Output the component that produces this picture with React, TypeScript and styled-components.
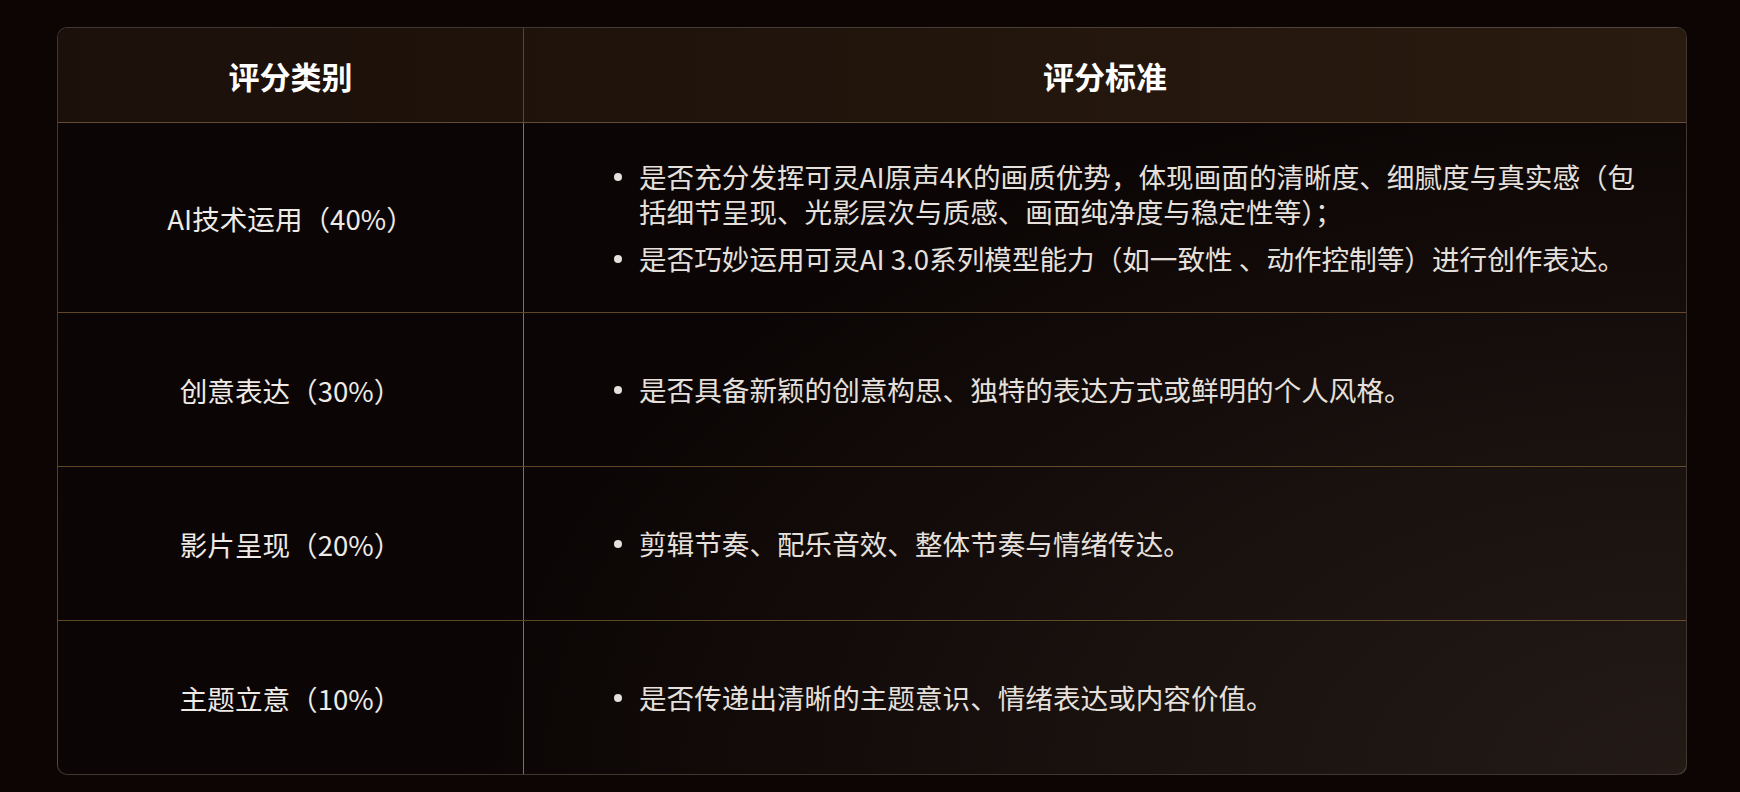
import React from 'react'
import styled, { createGlobalStyle } from 'styled-components';

type Criterion = {
    category: string;
    points: Array<string>;
};

const criteria: Array<Criterion> = [
    {
        category: 'AI技术运用（40%）',
        points: [
            '是否充分发挥可灵AI原声4K的画质优势，体现画面的清晰度、细腻度与真实感（包括细节呈现、光影层次与质感、画面纯净度与稳定性等）；',
            '是否巧妙运用可灵AI 3.0系列模型能力（如一致性 、动作控制等）进行创作表达。',
        ],
    },
    {
        category: '创意表达（30%）',
        points: ['是否具备新颖的创意构思、独特的表达方式或鲜明的个人风格。'],
    },
    {
        category: '影片呈现（20%）',
        points: ['剪辑节奏、配乐音效、整体节奏与情绪传达。'],
    },
    {
        category: '主题立意（10%）',
        points: ['是否传递出清晰的主题意识、情绪表达或内容价值。'],
    },
];

function App() {
    return (
        <>
            <GlobalStyle />
            <Page>
                <Table>
                    <HeadRow>
                        <HeadCell>评分类别</HeadCell>
                        <HeadCell divider>评分标准</HeadCell>
                    </HeadRow>
                    {criteria.map((row, index) => (
                        <Row key={index} last={index === criteria.length - 1}>
                            <CategoryCell>{row.category}</CategoryCell>
                            <CriteriaCell>
                                <PointList>
                                    {row.points.map((point, i) => (
                                        <Point key={i}>
                                            <Dot />
                                            <span>{point}</span>
                                        </Point>
                                    ))}
                                </PointList>
                            </CriteriaCell>
                        </Row>
                    ))}
                </Table>
            </Page>
        </>
    )
}

export default App

const GlobalStyle = createGlobalStyle`
    html, body {
        margin: 0;
        padding: 0;
        background: #0c0504;
    }
    body {
        font-family: "Noto Sans CJK SC", "Noto Sans", sans-serif;
        color: #e6e0dc;
    }
`

const Page = styled.div`
    width: 1740px;
    height: 792px;
    box-sizing: border-box;
    padding: 27px 53px 0 57px;
    background: #0c0504;
`

const Table = styled.div`
    width: 1630px;
    box-sizing: border-box;
    border: 1px solid rgba(255, 235, 210, 0.22);
    border-radius: 10px;
    overflow: hidden;
    background:
        radial-gradient(ellipse 75% 95% at 100% 100%, #231a16 0%, #1b1310 40%, #0b0505 100%);
`

const HeadRow = styled.div`
    display: grid;
    grid-template-columns: 465px 1fr;
    height: 94px;
    background: linear-gradient(90deg, #1b100a 0%, #22150c 55%, #2a1b10 100%);
    border-bottom: 1px solid rgba(150, 115, 75, 0.6);
`

const HeadCell = styled.div<{ divider?: boolean }>`
    display: flex;
    align-items: center;
    justify-content: center;
    font-size: 31px;
    font-weight: 700;
    color: #ffffff;
    border-left: ${(p) => (p.divider ? '1px solid rgba(170, 130, 80, 0.45)' : 'none')};
`

const Row = styled.div<{ last?: boolean }>`
    display: grid;
    grid-template-columns: 465px 1fr;
    min-height: 153px;
    border-bottom: ${(p) => (p.last ? 'none' : '1px solid rgba(165, 125, 60, 0.55)')};
`

const CategoryCell = styled.div`
    display: flex;
    align-items: center;
    justify-content: center;
    font-size: 27.6px;
    font-weight: 400;
    color: #eeeae6;
`

const CriteriaCell = styled.div`
    display: flex;
    align-items: center;
    padding: 36px 45px 36px 90px;
    border-left: 1px solid rgba(190, 145, 75, 0.75);
`

const PointList = styled.ul`
    list-style: none;
    margin: 0;
    padding: 0;
    display: flex;
    flex-direction: column;
    gap: 12px;
`

const Point = styled.li`
    display: flex;
    align-items: flex-start;
    gap: 17px;
    font-size: 27.6px;
    line-height: 35px;
    color: #e6e0dc;
`

const Dot = styled.i`
    flex-shrink: 0;
    width: 8px;
    height: 8px;
    margin-top: 14px;
    border-radius: 50%;
    background: #e6e0dc;
`
